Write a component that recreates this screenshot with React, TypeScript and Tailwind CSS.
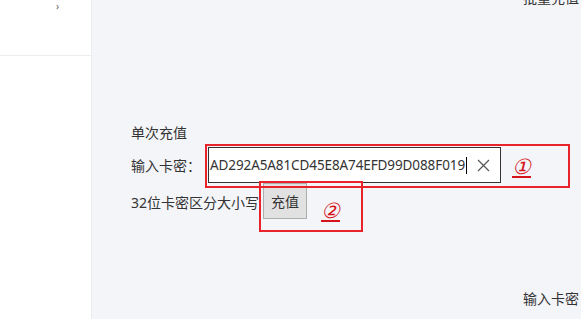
import React from "react";

export default function App() {
  const font = { fontFamily: '"Noto Sans", "Noto Sans CJK SC", sans-serif' };
  return (
    <div className="flex w-[581px] h-[319px] overflow-hidden text-[#333]" style={font}>
      <aside className="w-[92px] shrink-0 bg-white border-r border-[#ececf0] flex flex-col">
        <div className="h-[56px] border-b border-[#ececf0] pl-[56px] text-[10px] leading-[12px] text-[#666]">
          ›
        </div>
      </aside>
      <main className="relative flex-1 bg-[#f4f5f9] flex flex-col">
        <div className="flex justify-end pr-[2px] mt-[-12px] text-[14px] leading-[20px] text-[#333]">
          批量充值
        </div>
        <div className="pl-[39px] mt-[114px] flex flex-col">
          <div className="text-[14px] leading-[22px] text-[#333]">单次充值</div>
          <div className="flex items-center mt-[3px]">
            <span className="w-[77px] text-[14px] text-[#333]">输入卡密：</span>
            <div className="w-[293px] h-[36px] bg-white border border-[#333] flex items-center pl-[1px] pr-[9px]">
              <span className="text-[13.5px] text-[#333] tracking-[-0.1px]">AD292A5A81CD45E8A74EFD99D088F019</span>
              <span className="w-px h-[17px] bg-black ml-[1px]" />
              <span className="flex-1" />
              <svg width="13" height="13" viewBox="0 0 13 13" className="mr-[1px]">
                <path d="M1 1 L12 12 M12 1 L1 12" stroke="#555" strokeWidth="1.2" fill="none" />
              </svg>
            </div>
          </div>
          <div className="flex items-start">
            <span className="text-[14px] leading-[20px] text-[#333] mt-[10px] mr-[4px]">32位卡密区分大小写</span>
            <button className="w-[44px] h-[36px] bg-[#e1e1e1] border border-[#adadad] text-[14px] text-[#333] flex items-center justify-center">
              充值
            </button>
          </div>
        </div>
        <div className="flex-1" />
        <div className="flex justify-end pr-[2px] mb-[10px] text-[14px] leading-[20px] text-[#333]">
          输入卡密
        </div>

        <div className="absolute left-[113px] top-[144px] w-[365px] h-[44px] border-2 border-[#e8232a] pointer-events-none" />
        <div className="absolute left-[167px] top-[181px] w-[104px] h-[51px] border-2 border-[#e8232a] pointer-events-none" />
        <span
          className="absolute left-[420px] top-[155px] text-[21px] leading-[24px] italic underline text-[#d4141a]"
          style={{ fontFamily: '"Liberation Serif", serif' }}
        >
          ①
        </span>
        <span
          className="absolute left-[229px] top-[199px] text-[21px] leading-[24px] italic underline text-[#d4141a]"
          style={{ fontFamily: '"Liberation Serif", serif' }}
        >
          ②
        </span>
      </main>
    </div>
  );
}
